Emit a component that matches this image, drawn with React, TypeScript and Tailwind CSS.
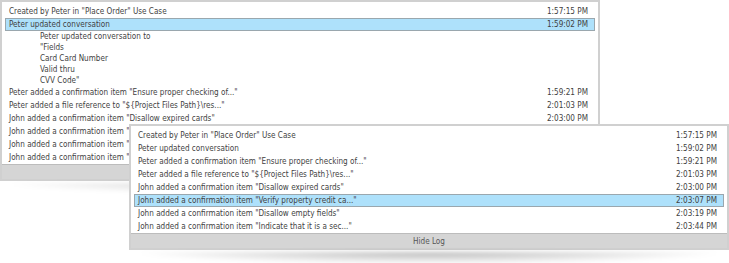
import React from "react";

type Row = { text: string; time: string; selected?: boolean; sub?: string[] };

const rows1: Row[] = [
  { text: 'Created by Peter in "Place Order" Use Case', time: "1:57:15 PM" },
  {
    text: "Peter updated conversation",
    time: "1:59:02 PM",
    selected: true,
    sub: ["Peter updated conversation to", '"Fields', "Card Card Number", "Valid thru", 'CVV Code"'],
  },
  { text: 'Peter added a confirmation item "Ensure proper checking of..."', time: "1:59:21 PM" },
  { text: 'Peter added a file reference to "${Project Files Path}\\res..."', time: "2:01:03 PM" },
  { text: 'John added a confirmation item "Disallow expired cards"', time: "2:03:00 PM" },
  { text: 'John added a confirmation item "', time: "" },
  { text: 'John added a confirmation item "', time: "" },
  { text: 'John added a confirmation item "', time: "" },
];

const rows2: Row[] = [
  { text: 'Created by Peter in "Place Order" Use Case', time: "1:57:15 PM" },
  { text: "Peter updated conversation", time: "1:59:02 PM" },
  { text: 'Peter added a confirmation item "Ensure proper checking of..."', time: "1:59:21 PM" },
  { text: 'Peter added a file reference to "${Project Files Path}\\res..."', time: "2:01:03 PM" },
  { text: 'John added a confirmation item "Disallow expired cards"', time: "2:03:00 PM" },
  { text: 'John added a confirmation item "Verify property credit ca..."', time: "2:03:07 PM", selected: true },
  { text: 'John added a confirmation item "Disallow empty fields"', time: "2:03:19 PM" },
  { text: 'John added a confirmation item "Indicate that it is a sec..."', time: "2:03:44 PM" },
];

function LogRow({ row }: { row: Row }) {
  return (
    <>
      <div
        className={
          "mx-[3px] h-[13px] flex items-center justify-between pl-[3px] pr-[6px] border " +
          (row.selected ? "bg-[#aee1fb] border-[#9aa7ae]" : "border-transparent")
        }
      >
        <span className="whitespace-nowrap">{row.text}</span>
        <span className="whitespace-nowrap">{row.time}</span>
      </div>
      {row.sub && (
        <div className="pl-[38px] flex flex-col leading-[11px]">
          {row.sub.map((s, i) => (
            <span key={i} className="whitespace-nowrap">
              {s}
            </span>
          ))}
        </div>
      )}
    </>
  );
}

function Panel({ rows, footer }: { rows: Row[]; footer?: string }) {
  return (
    <div className="w-[600px] border-2 border-[#d0d0d0] bg-white flex flex-col">
      <div className="pt-[3px] flex flex-col">
        {rows.map((r, i) => (
          <LogRow key={i} row={r} />
        ))}
      </div>
      <div className="h-[15px] border-t border-[#bcbcbc] bg-[#d5d5d5] flex items-center justify-center text-[#555555]">
        {footer}
      </div>
    </div>
  );
}

function Shadow() {
  return (
    <div className="mx-[10px] mt-[2px] h-[12px] bg-[radial-gradient(ellipse_at_top,rgba(0,0,0,0.28),rgba(0,0,0,0)_72%)] blur-[2px]" />
  );
}

export default function App() {
  return (
    <div
      className="relative w-[729px] h-[263px] bg-white overflow-hidden text-[8.1px] leading-[13px] text-[#3f3f3f]"
      style={{ fontFamily: '"DejaVu Sans Condensed", "Liberation Sans", Arial, sans-serif' }}
    >
      <div className="flex flex-col">
        <Panel rows={rows1} />
        <Shadow />
      </div>
      <div className="absolute left-[129px] top-[124px] flex flex-col">
        <Panel rows={rows2} footer="Hide Log" />
        <Shadow />
      </div>
    </div>
  );
}
